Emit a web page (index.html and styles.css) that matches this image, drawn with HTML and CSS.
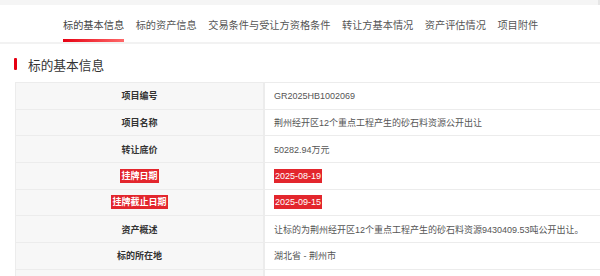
FILE: index.html
```html
<!DOCTYPE html>
<html lang="zh-CN">
<head>
  <meta charset="UTF-8" />
  <meta name="viewport" content="width=device-width, initial-scale=1.0"/>
  <title>标的基本信息</title>
  <link rel="stylesheet" href="styles.css">
</head>
<body>
  <div class="top-strip"></div>

  <nav class="tabs">
    <a class="tab active">标的基本信息</a>
    <a class="tab">标的资产信息</a>
    <a class="tab">交易条件与受让方资格条件</a>
    <a class="tab">转让方基本情况</a>
    <a class="tab">资产评估情况</a>
    <a class="tab">项目附件</a>
  </nav>

  <div class="content">
    <h2 class="section-title">标的基本信息</h2>

    <div class="info-table">
      <div class="info-row">
        <div class="info-label">项目编号</div>
        <div class="info-value">GR2025HB1002069</div>
      </div>
      <div class="info-row">
        <div class="info-label">项目名称</div>
        <div class="info-value">荆州经开区12个重点工程产生的砂石料资源公开出让</div>
      </div>
      <div class="info-row">
        <div class="info-label">转让底价</div>
        <div class="info-value">50282.94万元</div>
      </div>
      <div class="info-row">
        <div class="info-label"><span class="mark">挂牌日期</span></div>
        <div class="info-value"><span class="mark">2025-08-19</span></div>
      </div>
      <div class="info-row">
        <div class="info-label"><span class="mark">挂牌截止日期</span></div>
        <div class="info-value"><span class="mark">2025-09-15</span></div>
      </div>
      <div class="info-row">
        <div class="info-label">资产概述</div>
        <div class="info-value">让标的为荆州经开区12个重点工程产生的砂石料资源9430409.53吨公开出让。</div>
      </div>
      <div class="info-row">
        <div class="info-label">标的所在地</div>
        <div class="info-value">湖北省 - 荆州市</div>
      </div>
      <div class="info-row">
        <div class="info-label"></div>
        <div class="info-value"></div>
      </div>
    </div>
  </div>
</body>
</html>
```

FILE: styles.css
```css
* {
  box-sizing: border-box;
}

body {
  margin: 0;
  background-color: #fff;
  font-family: "Liberation Sans", "Noto Sans CJK SC", sans-serif;
  color: #333;
  overflow: hidden;
}

.top-strip {
  height: 5px;
  background-color: #f5f5f5;
  border-right: 2px solid #e6e6e6;
}

.tabs {
  display: flex;
  gap: 11.5px;
  height: 39px;
  padding-left: 63px;
  border-bottom: 2px solid #f2f2f2;
}

.tab {
  display: flex;
  align-items: center;
  height: 100%;
  padding-top: 5px;
  font-size: 10.2px;
  color: #555;
  border-bottom: 3px solid transparent;
  cursor: pointer;
}

.tab.active {
  color: #444;
  border-image: linear-gradient(to right, #e60012, #ff6b6b) 1;
}

.content {
  padding: 0 0 0 15px;
}

.section-title {
  display: flex;
  align-items: center;
  height: 38px;
  margin: 0;
  padding-top: 2px;
  font-size: 12.7px;
  font-weight: normal;
  color: #333;
}

.section-title::before {
  content: "";
  width: 3px;
  height: 12px;
  margin: 0 11px 0 -1px;
  background-color: #e60012;
  border-radius: 1px;
}

.info-table {
  border-top: 1px solid #ececec;
  border-left: 1px solid #ececec;
}

.info-row {
  display: grid;
  grid-template-columns: 249px 1fr;
  height: 26.67px;
  border-bottom: 1px solid #ececec;
  font-size: 9px;
}

.info-label {
  display: flex;
  align-items: center;
  justify-content: center;
  background-color: #f7f7f7;
  border-right: 2px solid #ececec;
  font-weight: bold;
  color: #333;
}

.info-value {
  display: flex;
  align-items: center;
  padding-left: 9px;
  color: #555;
}

.mark {
  padding: 2px 1px;
  line-height: 10px;
  background-color: #e3262d;
  color: #fff;
}
```
